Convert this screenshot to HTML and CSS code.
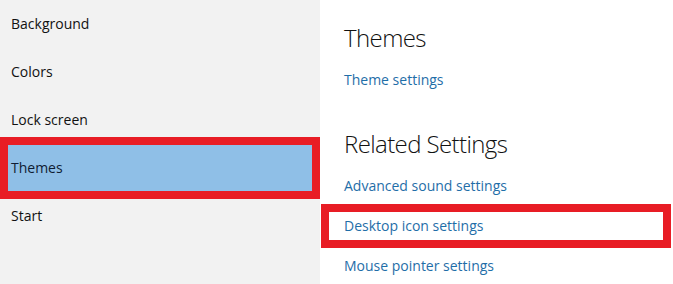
FILE: index.html
```html
<!DOCTYPE html>
<html lang="en">
<head>
    <meta charset="UTF-8">
    <meta name="viewport" content="width=device-width, initial-scale=1.0">
    <title>Personalization</title>
    <link rel="stylesheet" href="styles.css">
</head>
<body>

<div class="window">
    <!-- Sidebar -->
    <ul class="nav">
        <li class="nav-item">Background</li>
        <li class="nav-item">Colors</li>
        <li class="nav-item">Lock screen</li>
        <li class="nav-item selected">Themes</li>
        <li class="nav-item">Start</li>
    </ul>

    <!-- Content -->
    <div class="content">
        <h2 class="heading">Themes</h2>
        <a class="link" href="#">Theme settings</a>

        <h2 class="heading related">Related Settings</h2>
        <a class="link" href="#">Advanced sound settings</a>
        <a class="link marked" href="#">Desktop icon settings</a>
        <a class="link" href="#">Mouse pointer settings</a>
    </div>
</div>

</body>
</html>
```

FILE: styles.css
```css
body {
    margin: 0;
    font-family: 'Open Sans', 'Noto Sans', sans-serif;
    background: #ffffff;
    color: #111;
}
.window {
    display: flex;
    width: 673px;
    height: 284px;
    overflow: hidden;
}
.nav {
    list-style: none;
    margin: 0;
    padding: 0;
    width: 320px;
    flex-shrink: 0;
    background-color: #f2f2f2;
}
.nav-item {
    height: 48px;
    line-height: 48px;
    padding-left: 11px;
    font-size: 14px;
    color: #111;
}
.nav-item.selected {
    height: 46px;
    line-height: 46px;
    margin: 1px 8px;
    padding-left: 3px;
    background-color: #8fbfe7;
    color: #0f1c33;
    outline: 8px solid #e81d25;
}
.content {
    flex: 1;
    padding: 20px 0 0 24px;
}
.heading {
    margin: 0;
    font-size: 24px;
    font-weight: 300;
    letter-spacing: -0.6px;
    line-height: 36px;
    color: #111;
}
.heading.related {
    margin-top: 36px;
}
.link {
    display: block;
    margin-top: 14px;
    line-height: 20px;
    font-size: 14px;
    color: #1f6ea8;
    text-decoration: none;
}
.link.marked {
    width: 319px;
    height: 28px;
    line-height: 28px;
    margin: 16px 0 0 -15px;
    padding-left: 15px;
    outline: 8px solid #e81d25;
}
.link.marked + .link {
    margin-top: 16px;
}
```
